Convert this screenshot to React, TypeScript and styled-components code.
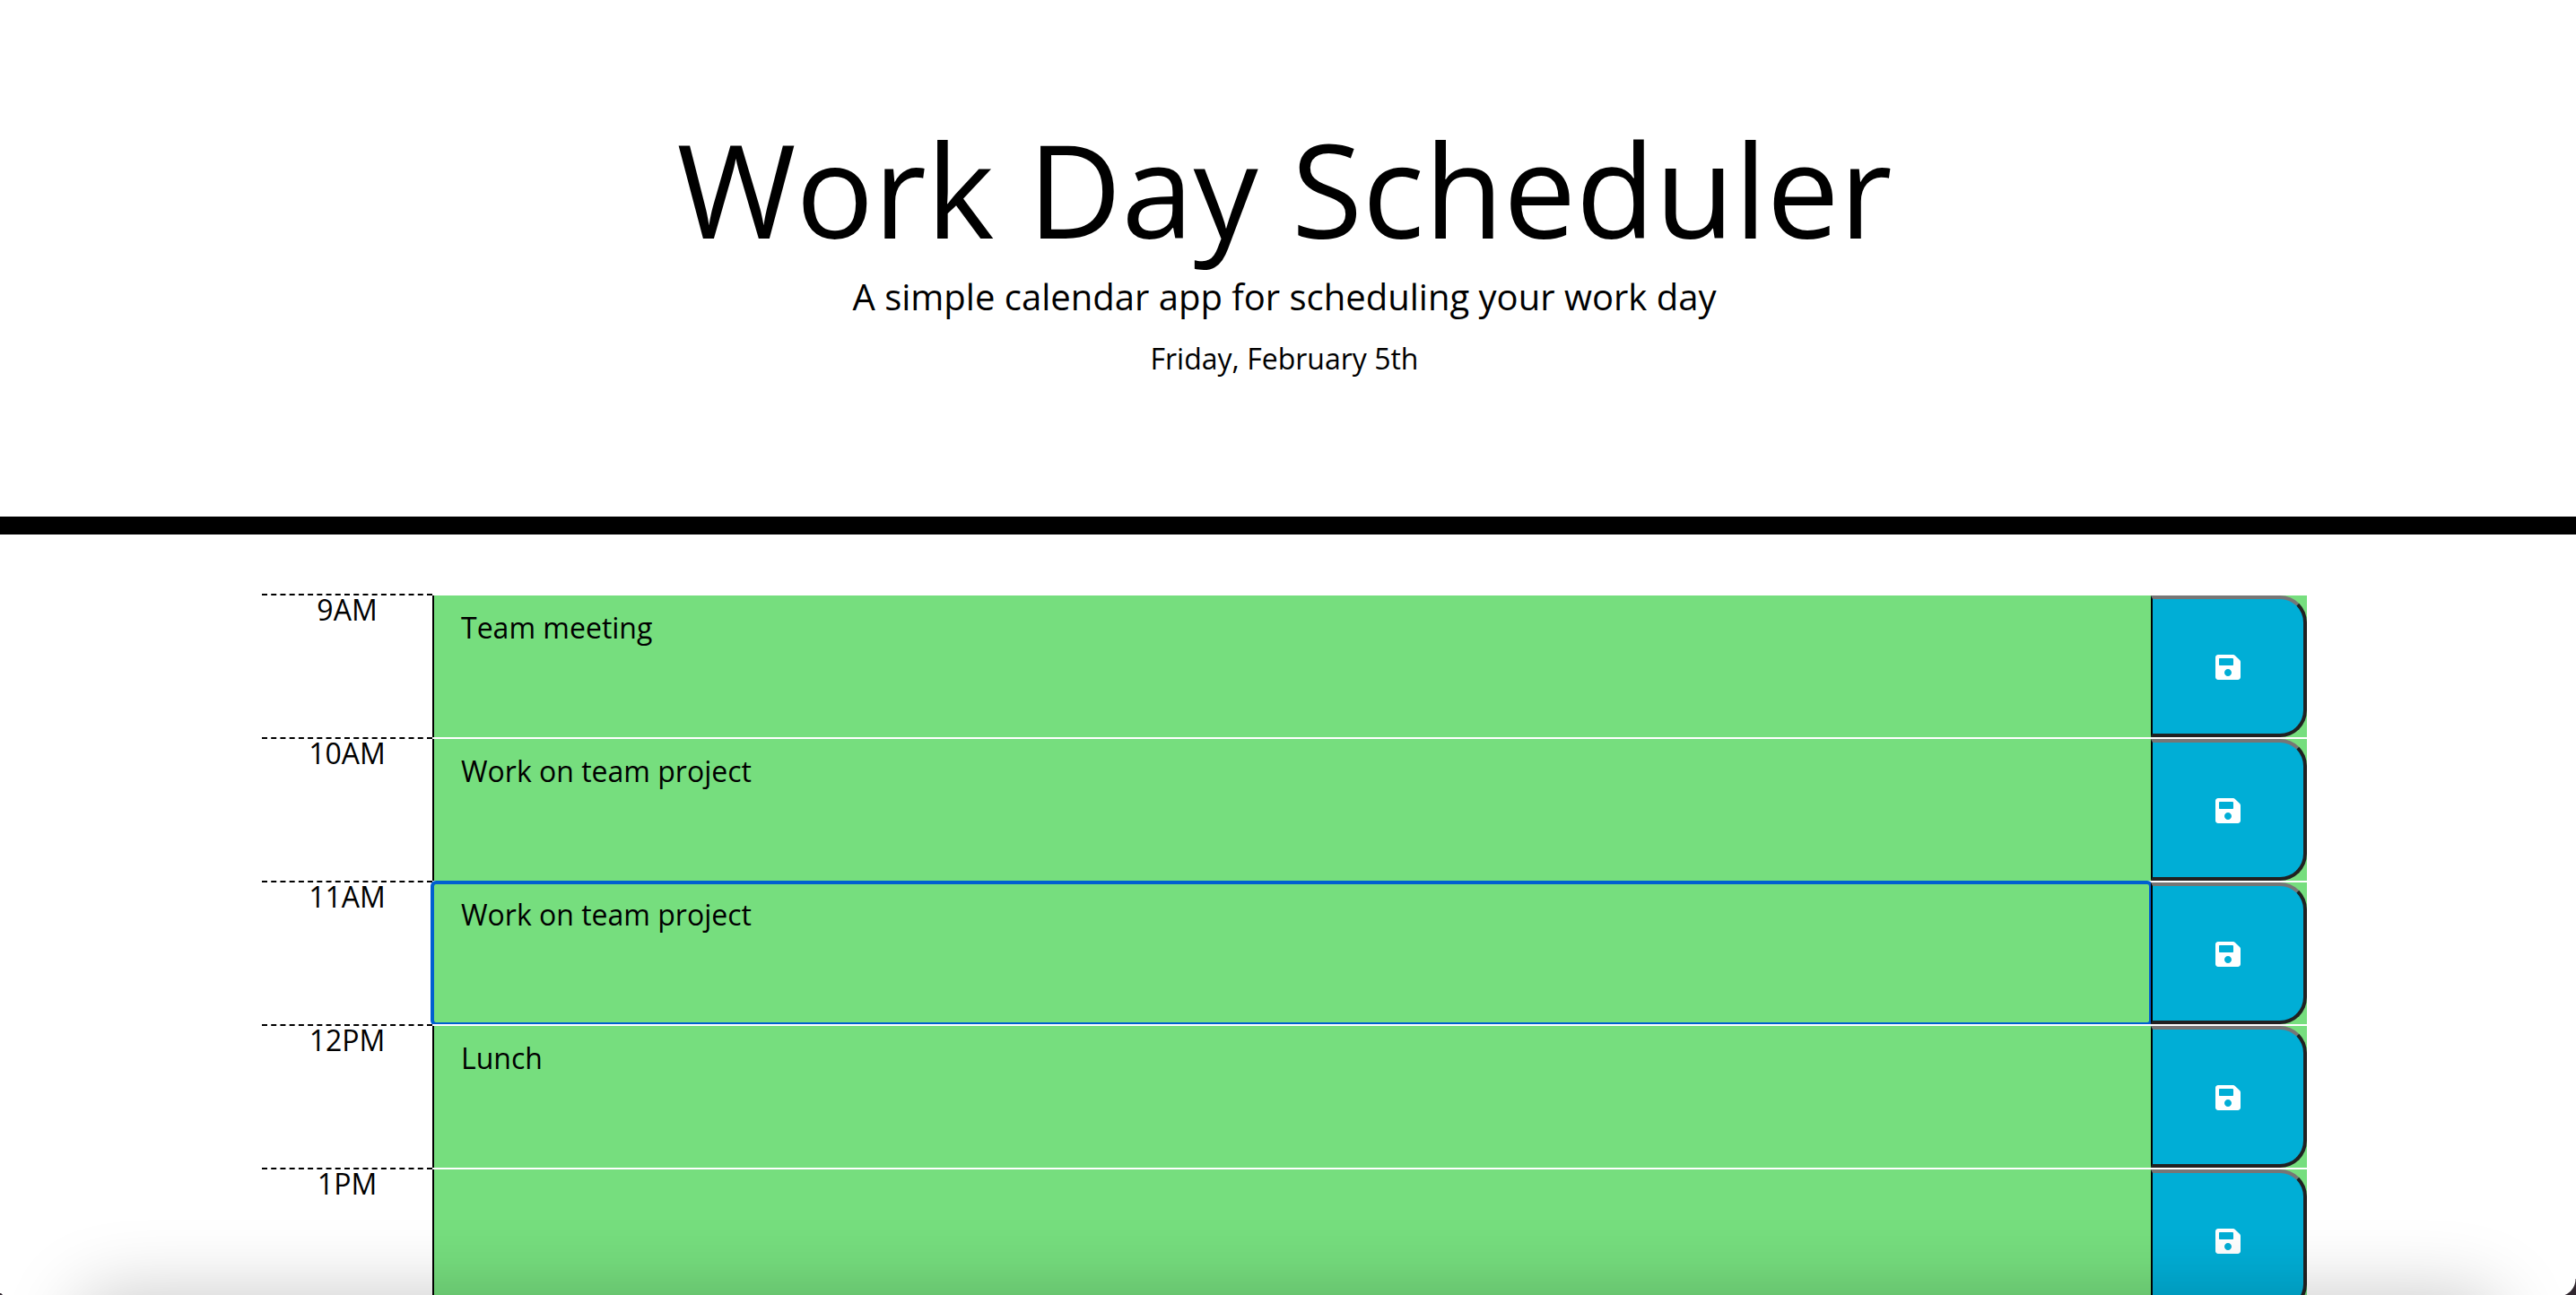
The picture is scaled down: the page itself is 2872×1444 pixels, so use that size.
import React, { useState } from "react";
import styled, { createGlobalStyle } from "styled-components";
import { FaSave } from "react-icons/fa";

const GlobalStyle = createGlobalStyle`
  *, *::before, *::after { box-sizing: border-box; }
  body {
    margin: 0;
    background: #fff;
    color: #000;
    font-family: "Open Sans", "Noto Sans", sans-serif;
    font-size: 32px;
    line-height: 48px;
  }
`;

const Page = styled.div`
  position: relative;
  height: 100vh;
  overflow: hidden;
`;

const Header = styled.header`
  padding: 124px 8px 152px 0;
  border-bottom: 20px solid #000;
  text-align: center;
`;

const Title = styled.h1`
  margin: 0 0 5px;
  font-size: 144px;
  font-weight: 400;
  line-height: 172px;
`;

const Tagline = styled.p`
  margin: 0 0 15px;
  font-size: 40px;
  line-height: 60px;
`;

const Today = styled.p`
  margin: 0;
`;

const Main = styled.main`
  padding: 66px 8px 0 0;
`;

const Schedule = styled.div`
  max-width: 2280px;
  margin: 0 auto;
`;

const TimeBlock = styled.form`
  position: relative;
  display: flex;
  height: 160px;
`;

const Hour = styled.label`
  flex: 0 0 190px;
  height: 100%;
  border-top: 2px dashed #000;
  line-height: 32px;
  text-align: center;
`;

const Slot = styled.div`
  flex: 1;
  display: flex;
  border-top: 2px solid #fff;
  background: #76de7e;
`;

const Task = styled.textarea<{ $active: boolean }>`
  flex: 1;
  min-width: 0;
  padding: 12px 30px;
  border: solid #000;
  border-width: 0 0 0 2px;
  border-radius: 0;
  background: transparent;
  color: #000;
  font: inherit;
  resize: none;
  overflow: hidden;
  outline: ${(p) => (p.$active ? "4px solid #0060d0" : "none")};
  outline-offset: -2px;
  ${(p) => p.$active && "border-radius: 4px;"}
`;

const SaveButton = styled.button`
  position: relative;
  flex: 0 0 174px;
  display: flex;
  align-items: center;
  justify-content: center;
  padding: 2px 0 0;
  border: 4px solid #212121;
  border-top-color: #767676;
  border-left: 2px solid #000;
  border-radius: 0 30px 30px 0;
  background: #00aed6;
  color: #fff;
  font-size: 32px;
  cursor: pointer;
`;

const DockShadow = styled.div`
  position: absolute;
  top: 100%;
  left: 88px;
  right: 88px;
  height: 200px;
  border-radius: 30px;
  box-shadow: 0 0 84px rgba(0, 0, 0, 0.22);
  pointer-events: none;
`;

const WindowCorner = styled.div<{ $side: "left" | "right" }>`
  position: absolute;
  bottom: 0;
  ${(p) => p.$side}: 0;
  width: ${(p) => (p.$side === "right" ? 20 : 3)}px;
  height: ${(p) => (p.$side === "right" ? 18 : 2)}px;
  background: ${(p) =>
    p.$side === "right"
      ? "radial-gradient(circle at 0 0, transparent 19px, #30262e 20px)"
      : "radial-gradient(circle at 100% 0, transparent 1px, #30262e 2px)"};
  pointer-events: none;
`;

const initialTasks = [
  { hour: "9AM", text: "Team meeting" },
  { hour: "10AM", text: "Work on team project" },
  { hour: "11AM", text: "Work on team project" },
  { hour: "12PM", text: "Lunch" },
  { hour: "1PM", text: "" },
];

export default function App() {
  const [tasks, setTasks] = useState(initialTasks);
  const [active, setActive] = useState("11AM");

  const edit = (hour: string, text: string) =>
    setTasks(tasks.map((t) => (t.hour === hour ? { ...t, text } : t)));

  return (
    <Page>
      <GlobalStyle />
      <Header>
        <Title>Work Day Scheduler</Title>
        <Tagline>A simple calendar app for scheduling your work day</Tagline>
        <Today>Friday, February 5th</Today>
      </Header>
      <Main>
        <Schedule>
          {tasks.map(({ hour, text }) => (
            <TimeBlock key={hour} onSubmit={(e) => e.preventDefault()}>
              <Hour htmlFor={`task-${hour}`}>{hour}</Hour>
              <Slot>
                <Task
                  id={`task-${hour}`}
                  value={text}
                  spellCheck={false}
                  $active={active === hour}
                  onFocus={() => setActive(hour)}
                  onChange={(e) => edit(hour, e.target.value)}
                />
                <SaveButton type="submit" aria-label={`Save ${hour}`}>
                  <FaSave />
                </SaveButton>
              </Slot>
            </TimeBlock>
          ))}
        </Schedule>
      </Main>
      <DockShadow />
      <WindowCorner $side="left" />
      <WindowCorner $side="right" />
    </Page>
  );
}
